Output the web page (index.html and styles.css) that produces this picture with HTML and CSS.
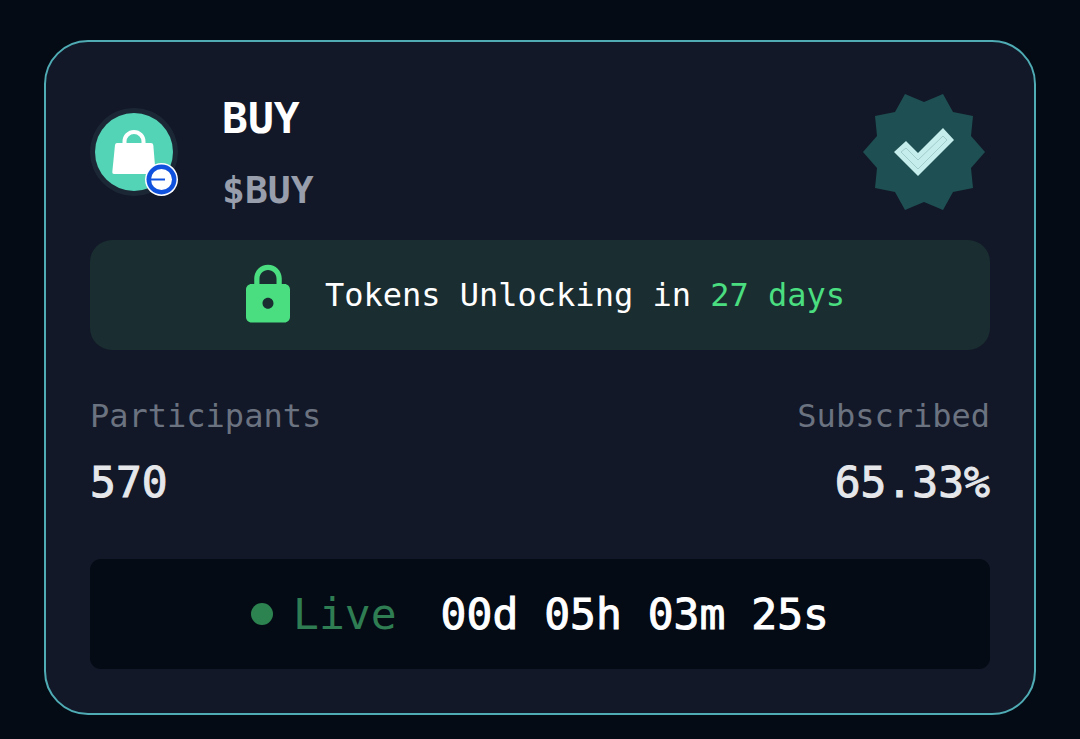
FILE: index.html
```html
<!DOCTYPE html>
<html lang="en">
<head>
    <meta charset="UTF-8">
    <meta name="viewport" content="width=device-width, initial-scale=1.0">
    <title>BUY</title>
    <link rel="stylesheet" href="styles.css">
</head>
<body>
    <main class="card">
        <header class="card-header">
            <svg class="avatar" viewBox="0 0 88 88" aria-hidden="true">
                <circle cx="44" cy="44" r="44" fill="#1c2735"/>
                <circle cx="44" cy="44" r="39" fill="#53d4b6"/>
                <path d="M34.5 36V33.500a9.500 9.500 0 0 1 19 0V36" fill="none" stroke="#fff" stroke-width="4"/>
                <path d="M27 35H61Q63 35 63.300 37L65.500 64Q65.500 66 63.500 66H24Q22 66 22.300 64L25 37Q25.300 35 27 35Z" fill="#fff"/>
                <circle cx="71.500" cy="71.500" r="16.500" fill="#fff"/>
                <circle cx="71.500" cy="71.500" r="15" fill="#1052de"/>
                <circle cx="71.500" cy="71.500" r="10.500" fill="#fff"/>
                <path d="M59 71.500H75" stroke="#1052de" stroke-width="2"/>
            </svg>
            <div class="token">
                <h1 class="token-name">BUY</h1>
                <p class="token-symbol">$BUY</p>
            </div>
            <svg class="verified" viewBox="0 0 132 132" role="img" aria-label="Verified">
                <polygon fill="#1e4f52" points="127,66 113,82 115,102 95,106 85,124 66,116 47,124 37,106 17,102 19,82 5,66 19,50 17,30 37,26 47,8 66,16 85,8 95,26 115,30 113,50"/>
                <polygon fill="#c5edec" points="48,55 60,67 85,42 96,54 60,90 36,66"/>
                <polygon fill="none" stroke="#8fbdbd" stroke-width="0.7" points="48,62 60,74 85,50 89,54 60,83 43,66"/>
            </svg>
        </header>

        <div class="unlock">
            <svg class="lock" viewBox="0 0 24 24" aria-hidden="true">
                <path fill="#4ade80" d="M18 8h-1V6c0-2.760-2.240-5-5-5S7 3.240 7 6v2H6c-1.100 0-2 .9-2 2v10c0 1.100.9 2 2 2h12c1.100 0 2-.9 2-2V10c0-1.100-.9-2-2-2zm-6 9c-1.100 0-2-.9-2-2s.9-2 2-2 2 .9 2 2-.9 2-2 2zm3.100-9H8.900V6c0-1.710 1.390-3.100 3.100-3.100s3.100 1.390 3.100 3.100v2z"/>
            </svg>
            <p>Tokens Unlocking in <span class="days">27 days</span></p>
        </div>

        <dl class="stats">
            <div>
                <dt>Participants</dt>
                <dd>570</dd>
            </div>
            <div class="right">
                <dt>Subscribed</dt>
                <dd>65.33%</dd>
            </div>
        </dl>

        <div class="countdown">
            <span class="dot"></span>
            <span class="live">Live</span>
            <time class="timer">00d 05h 03m 25s</time>
        </div>
    </main>
</body>
</html>
```
FILE: styles.css
```css
* {
    box-sizing: border-box;
}
body {
    margin: 0;
    padding: 40px 44px 24px;
    background-color: #040b15;
    color: #fff;
    font-family: "DejaVu Sans Mono", monospace;
    font-size: 32px;
    line-height: 48px;
}
h1, p, dl, dd {
    margin: 0;
}
.card {
    padding: 44px;
    border: 2px solid #4fabb4;
    border-radius: 44px;
    background-color: #121827;
}
.card-header {
    display: flex;
    align-items: center;
    gap: 44px;
    margin-bottom: 22px;
}
.avatar {
    width: 88px;
    height: 88px;
    overflow: visible;
}
.token {
    display: flex;
    flex-direction: column;
    gap: 12px;
}
.token-name {
    font-size: 43px;
    line-height: 64px;
}
.token-symbol {
    color: #989eac;
    font-size: 38px;
    font-weight: bold;
    line-height: 56px;
}
.verified {
    width: 132px;
    height: 132px;
    margin-left: auto;
}
.unlock {
    display: flex;
    align-items: center;
    justify-content: center;
    gap: 24px;
    min-height: 110px;
    border-radius: 22px;
    background-color: #1a2d30;
}
.lock {
    width: 66px;
    height: 66px;
}
.days {
    color: #4ade80;
}
.stats {
    display: flex;
    justify-content: space-between;
    margin: 42px 0 45px;
}
.stats dt {
    color: #6b7280;
}
.stats dd {
    margin-top: 10px;
    color: #e5e7eb;
    font-size: 43px;
    line-height: 64px;
    -webkit-text-stroke: 1px;
}
.right {
    text-align: right;
}
.countdown {
    display: flex;
    align-items: center;
    justify-content: center;
    min-height: 110px;
    border-radius: 11px;
    background-color: #040b15;
    font-size: 43px;
    line-height: 64px;
}
.dot {
    width: 22px;
    height: 22px;
    margin-right: 20px;
    border-radius: 50%;
    background-color: #2d834f;
}
.live {
    margin-right: 44px;
    color: #2f7d52;
}
.timer {
    -webkit-text-stroke: 1px;
}
```
